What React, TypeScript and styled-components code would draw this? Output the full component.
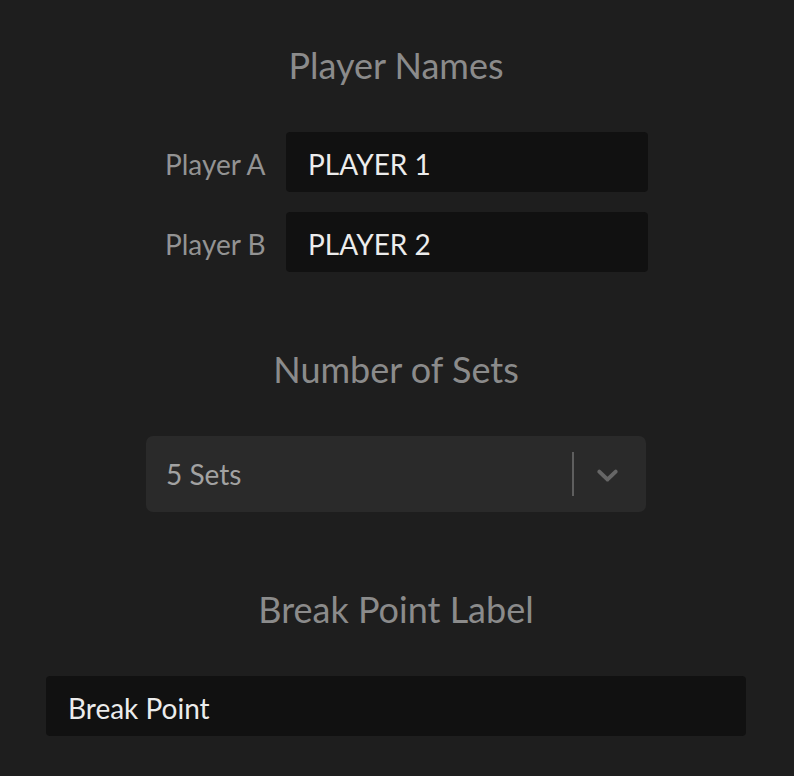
import React from "react";
import styled, { createGlobalStyle } from "styled-components";

const GlobalStyle = createGlobalStyle`
  html, body {
    margin: 0;
    padding: 0;
    background: #1e1e1e;
    font-family: Lato, "Open Sans", sans-serif;
  }
  * { box-sizing: border-box; }
`;

const Page = styled.div`
  width: 792px;
  min-height: 776px;
  background: #1e1e1e;
  display: flex;
  flex-direction: column;
  align-items: center;
  padding-top: 43px;
  gap: 75px;
`;

const Section = styled.section`
  display: flex;
  flex-direction: column;
  align-items: center;
  gap: 45px;
  width: 100%;
`;

const Heading = styled.h2`
  margin: 0;
  font-size: 36px;
  line-height: 44px;
  font-weight: 400;
  color: #8b8b8b;
  text-align: center;
`;

const NameGrid = styled.div`
  display: grid;
  grid-template-columns: 101px 362px;
  column-gap: 20px;
  row-gap: 20px;
  align-items: center;
  padding-left: 21px;
`;

const Label = styled.label`
  font-size: 28px;
  color: #939393;
  white-space: nowrap;
  padding-top: 3px;
`;

const TextInput = styled.input<{ $width?: number }>`
  width: ${(p) => (p.$width ? `${p.$width}px` : "100%")};
  height: 60px;
  border: none;
  outline: none;
  border-radius: 4px;
  background: #111111;
  color: #ececec;
  font-family: Lato, sans-serif;
  font-size: 28px;
  padding: 3px 22px 0;
`;

const Select = styled.div`
  width: 500px;
  height: 76px;
  border-radius: 7px;
  background: #2a2a2a;
  display: flex;
  align-items: center;
`;

const SelectValue = styled.div`
  flex: 1;
  padding-left: 20px;
  font-size: 28px;
  color: #a2a2a2;
`;

const Divider = styled.span`
  width: 2px;
  height: 44px;
  background: #5e5e5e;
`;

const Indicator = styled.div`
  display: flex;
  align-items: center;
  padding: 0 21px 0 16px;
  color: #666666;
`;

const Chevron = () => (
  <svg width="35" height="35" viewBox="0 0 20 20" fill="currentColor" aria-hidden="true">
    <path d="M4.516 7.548c0.436-0.446 1.043-0.481 1.576 0l3.908 3.747 3.908-3.747c0.533-0.481 1.141-0.446 1.574 0 0.436 0.445 0.408 1.197 0 1.615-0.406 0.418-4.695 4.502-4.695 4.502-0.217 0.223-0.502 0.335-0.787 0.335s-0.57-0.112-0.789-0.335c0 0-4.287-4.084-4.695-4.502s-0.436-1.170 0-1.615z" />
  </svg>
);

export default function App() {
  return (
    <>
      <GlobalStyle />
      <Page>
        <Section>
          <Heading>Player Names</Heading>
          <NameGrid>
            <Label htmlFor="pa">Player A</Label>
            <TextInput id="pa" defaultValue="PLAYER 1" />
            <Label htmlFor="pb">Player B</Label>
            <TextInput id="pb" defaultValue="PLAYER 2" />
          </NameGrid>
        </Section>
        <Section>
          <Heading>Number of Sets</Heading>
          <Select>
            <SelectValue>5 Sets</SelectValue>
            <Divider />
            <Indicator>
              <Chevron />
            </Indicator>
          </Select>
        </Section>
        <Section>
          <Heading>Break Point Label</Heading>
          <TextInput $width={700} defaultValue="Break Point" />
        </Section>
      </Page>
    </>
  );
}
